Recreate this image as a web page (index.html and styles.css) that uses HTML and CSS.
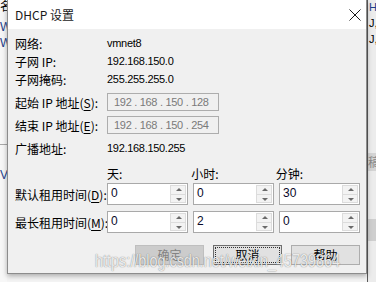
FILE: index.html
```html
<!DOCTYPE html>
<html lang="zh-CN">

<head>
    <meta charset="UTF-8">
    <meta name="viewport" content="width=device-width, initial-scale=1.0">
    <title>DHCP 设置</title>
    <link rel="stylesheet" href="styles.css">
</head>

<body>
    <div class="screen">
        <div class="edge edgeLeft">
            <span class="frag fragTop">名</span>
            <span class="frag fragBlue">W</span>
            <span class="frag fragBlue">W</span>
            <span class="edgeRule"></span>
            <span class="frag fragBlue fragLow">V</span>
        </div>

        <div class="dialog">
            <div class="titlebar">
                <span class="title">DHCP 设置</span>
                <svg class="close" width="12" height="12" viewBox="0 0 12 12">
                    <path d="M0.5 0.5 L11.5 11.5 M11.5 0.5 L0.5 11.5" stroke="#1a1a1a" stroke-width="1" fill="none" />
                </svg>
            </div>

            <div class="content">
                <div class="row info">
                    <span class="label">网络:</span>
                    <span class="value">vmnet8</span>
                </div>
                <div class="row info">
                    <span class="label">子网 IP:</span>
                    <span class="value">192.168.150.0</span>
                </div>
                <div class="row info">
                    <span class="label">子网掩码:</span>
                    <span class="value">255.255.255.0</span>
                </div>

                <div class="row field">
                    <span class="label">起始 IP 地址(<u>S</u>):</span>
                    <div class="ipBox">192 . 168 . 150 . 128</div>
                </div>
                <div class="row field">
                    <span class="label">结束 IP 地址(<u>E</u>):</span>
                    <div class="ipBox">192 . 168 . 150 . 254</div>
                </div>

                <div class="row info broadcast">
                    <span class="label">广播地址:</span>
                    <span class="value">192.168.150.255</span>
                </div>

                <div class="row units">
                    <span class="label"></span>
                    <span class="unit">天:</span>
                    <span class="unit">小时:</span>
                    <span class="unit">分钟:</span>
                </div>

                <div class="row spinRow">
                    <span class="label">默认租用时间(<u>D</u>):</span>
                    <div class="spin"><span class="spinValue">0</span><span class="spinBtns"><span class="spinUp"></span><span class="spinDown"></span></span></div>
                    <div class="spin"><span class="spinValue">0</span><span class="spinBtns"><span class="spinUp"></span><span class="spinDown"></span></span></div>
                    <div class="spin"><span class="spinValue">30</span><span class="spinBtns"><span class="spinUp"></span><span class="spinDown"></span></span></div>
                </div>
                <div class="row spinRow second">
                    <span class="label">最长租用时间(<u>M</u>):</span>
                    <div class="spin"><span class="spinValue">0</span><span class="spinBtns"><span class="spinUp"></span><span class="spinDown"></span></span></div>
                    <div class="spin"><span class="spinValue">2</span><span class="spinBtns"><span class="spinUp"></span><span class="spinDown"></span></span></div>
                    <div class="spin"><span class="spinValue">0</span><span class="spinBtns"><span class="spinUp"></span><span class="spinDown"></span></span></div>
                </div>

                <div class="buttons">
                    <button type="button" class="btn" disabled>确定</button>
                    <button type="button" class="btn focused"><span>取消</span></button>
                    <button type="button" class="btn">帮助</button>
                </div>
            </div>

            <div class="watermark">https://blog.csdn.net/weixin_45739864</div>
        </div>

        <div class="edge edgeRight">
            <span class="frag fragTop"><b class="blueH">H</b>e</span>
            <span class="frag">J,</span>
            <span class="frag">J,</span>
            <span class="band bandA">稿</span>
            <span class="band bandB"></span>
        </div>
    </div>
</body>

</html>
```

FILE: styles.css
```css
body {
    margin: 0;
    padding: 0;
    background: #f4f4f4;
    font-family: "Noto Sans CJK SC", "Noto Sans", sans-serif;
    font-size: 12px;
    color: #000000;
    overflow: hidden;
}

.screen {
    display: flex;
    width: 376px;
    height: 282px;
    align-items: flex-start;
}

/* window behind the dialog */
.edge {
    display: flex;
    flex-direction: column;
    overflow: hidden;
    height: 282px;
    font-family: "Liberation Sans", sans-serif;
    font-size: 12px;
    line-height: 16px;
}

.edgeLeft {
    width: 7px;
    background: #f7f7f7;
}

.edgeLeft .frag {
    white-space: nowrap;
}

.fragTop {
    margin-top: -1px;
    height: 16px;
}

.edgeLeft .fragBlue {
    color: #1f3f8a;
    margin-top: 4px;
    margin-bottom: -4px;
}

.edgeRule {
    display: block;
    height: 1px;
    background: #a8a8a8;
    margin-top: 97px;
}

.edgeLeft .fragLow {
    margin-top: 22px;
}

.edgeRight {
    width: 9px;
    background: #ececec;
    border-left: 1px solid #5a5a5a;
    box-sizing: border-box;
}

.edgeRight .frag {
    white-space: nowrap;
    margin-left: 1px;
    font-size: 11px;
}

.blueH {
    font-weight: normal;
    color: #1f3f8a;
}

.band {
    display: block;
    white-space: nowrap;
    font-family: "Noto Sans CJK SC", sans-serif;
    color: #8a8a8a;
}

.bandA {
    margin-top: 106px;
    height: 18px;
    line-height: 18px;
    background: #d4d4d4;
}

.bandB {
    margin-top: 48px;
    height: 22px;
    background: #cfcfcf;
}

/* the dialog */
.dialog {
    position: relative;
    width: 360px;
    height: 274px;
    box-sizing: border-box;
    border: 1px solid #8c8c8c;
    border-top: 0;
    background: #f0f0f0;
    box-shadow: 0 2px 5px rgba(0, 0, 0, 0.3);
}

.titlebar {
    display: flex;
    align-items: center;
    justify-content: space-between;
    height: 29px;
    background: #ffffff;
    padding: 0 5px 0 7px;
}

.title {
    font-size: 12px;
    color: #1a1a1a;
    margin-top: -1px;
}

.close {
    display: block;
}

.content {
    padding: 5px 6px 0 7px;
}

.row {
    display: flex;
    align-items: center;
}

.label {
    width: 92px;
    flex-shrink: 0;
    white-space: nowrap;
    font-size: 12px;
}

.label u {
    text-underline-offset: 2px;
}

.info {
    height: 18px;
}

.value {
    font-family: "Liberation Sans", sans-serif;
    font-size: 11px;
    letter-spacing: -0.3px;
}

.field {
    height: 18px;
    margin-top: 5px;
}

.ipBox {
    width: 112px;
    height: 18px;
    box-sizing: border-box;
    border: 1px solid #adadad;
    padding-left: 6px;
    font-family: "Liberation Sans", sans-serif;
    font-size: 11px;
    line-height: 16px;
    letter-spacing: -0.3px;
    color: #7a7a7a;
    white-space: pre;
}

.broadcast {
    margin-top: 5px;
}

.units {
    height: 18px;
    margin-top: 7px;
}

.unit {
    width: 86px;
    font-size: 12px;
}

.spinRow {
    height: 22px;
    margin-top: 1px;
    gap: 5px;
}

.spinRow .label {
    margin-right: -5px;
}

.spinRow.second {
    margin-top: 6px;
}

.spin {
    display: flex;
    width: 81px;
    height: 22px;
    box-sizing: border-box;
    border: 1px solid #a9a9a9;
    background: #ffffff;
    padding: 1px;
}

.spinValue {
    flex: 1;
    padding-left: 2px;
    font-family: "Liberation Sans", sans-serif;
    font-size: 12px;
    line-height: 16px;
    color: #0a0a2a;
}

.spinBtns {
    display: flex;
    flex-direction: column;
    width: 16px;
}

.spinUp,
.spinDown {
    flex: 1;
    position: relative;
    background: #f3f3f3;
    border: 1px solid #dcdcdc;
}

.spinDown {
    border-top: 0;
}

.spinUp::after,
.spinDown::after {
    content: "";
    position: absolute;
    left: 5px;
    top: 2px;
    border-left: 3px solid transparent;
    border-right: 3px solid transparent;
}

.spinUp::after {
    border-bottom: 3px solid #6a6a6a;
}

.spinDown::after {
    top: 3px;
    border-top: 3px solid #6a6a6a;
}

.buttons {
    display: flex;
    justify-content: flex-end;
    gap: 9px;
    margin-top: 12px;
}

.btn {
    width: 69px;
    height: 20px;
    padding: 0;
    border: 1px solid #adadad;
    background: #e1e1e1;
    font-family: "Noto Sans CJK SC", sans-serif;
    font-size: 12px;
    line-height: 16px;
    color: #000000;
}

.btn:disabled {
    background: #cccccc;
    border-color: #bfbfbf;
    color: #838383;
}

.btn.focused {
    border-color: #6f6f6f;
    padding: 1px;
}

.btn.focused span {
    display: block;
    height: 14px;
    line-height: 14px;
    border: 1px dotted #333333;
}

.watermark {
    position: absolute;
    left: 87px;
    top: 252px;
    font-family: "Liberation Sans", sans-serif;
    font-size: 18px;
    line-height: 18px;
    white-space: nowrap;
    color: rgba(255, 255, 255, 0.85);
    text-shadow: 0 0 1px rgba(0, 0, 0, 0.45), 0 0 2px rgba(0, 0, 0, 0.15);
    transform: scaleX(0.8);
    transform-origin: left top;
    pointer-events: none;
}
```
